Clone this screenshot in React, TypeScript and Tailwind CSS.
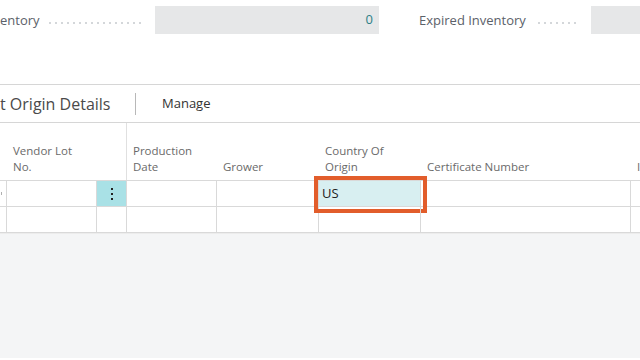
const font = { fontFamily: '"Open Sans", "Noto Sans", sans-serif' }

function Leader() {
  return <div className="flex-1 self-center mt-[5px] h-[2px] bg-[radial-gradient(circle,#d3d6d9_0.7px,transparent_1px)] bg-[length:6px_2px]" />
}

const cols = [
  { w: 'w-[7px]', head: [] as string[] },
  { w: 'w-[90px]', head: ['Vendor Lot', 'No.'] },
  { w: 'w-[30px]', head: [] },
  { w: 'w-[90px]', head: ['Production', 'Date'] },
  { w: 'w-[102px]', head: ['Grower'] },
  { w: 'w-[102px]', head: ['Country Of', 'Origin'] },
  { w: 'w-[210px]', head: ['Certificate Number'] },
  { w: 'w-[9px]', head: ['I'] },
]

function Row({ first }: { first?: boolean }) {
  return (
    <div className="flex h-[26px] border-b border-[#d9d9d9]">
      <div className="w-[7px] border-r border-[#d9d9d9] flex items-center">
        {first && <span className="ml-[1px] h-[3px] w-px bg-[#b0b0b0]" />}
      </div>
      <div className="w-[90px] border-r border-[#d9d9d9]" />
      <div className={`w-[30px] border-r border-[#d9d9d9] flex items-center justify-center ${first ? 'bg-[#a9e1e6]' : ''}`}>
        {first && (
          <div className="flex flex-col gap-[3px] items-center">
            <span className="w-[2px] h-[2px] bg-[#222]" />
            <span className="w-[2px] h-[2px] bg-[#222]" />
            <span className="w-[2px] h-[2px] bg-[#222]" />
          </div>
        )}
      </div>
      <div className="w-[90px] border-r border-[#d9d9d9]" />
      <div className="w-[102px] border-r border-[#d9d9d9]" />
      <div className={`relative w-[102px] border-r border-[#d9d9d9] flex items-center px-[3px] ${first ? 'bg-[#d8eff1]' : ''}`}>
        {first && (
          <>
            <span className="text-[13px] text-[#222]">US</span>
            <div className="absolute left-[-5px] top-[-5px] w-[113px] h-[37px] border-[4px] border-[#e25d2b]" />
          </>
        )}
      </div>
      <div className="w-[210px] border-r border-[#d9d9d9]" />
      <div className="flex-1" />
    </div>
  )
}

export default function App() {
  return (
    <div className="w-[640px] h-[360px] overflow-hidden bg-white flex flex-col" style={font}>
      <div className="h-[85px] border-b border-[#d6d6d6] pt-[6px]">
        <div className="flex h-[28px] items-stretch">
          <div className="w-[145px] flex items-center gap-[7px]">
            <span className="text-[13px] text-[#5b6169] leading-none mt-[1px]">entory</span>
            <Leader />
          </div>
          <div className="w-[10px]" />
          <div className="w-[224px] bg-[#e6e7e8] flex items-center justify-end pr-[6px] text-[13px] text-[#2f7f87]">0</div>
          <div className="w-[40px]" />
          <div className="w-[161px] flex items-center gap-[10px]">
            <span className="text-[13px] text-[#5b6169] leading-none mt-[1px]">Expired Inventory</span>
            <Leader />
          </div>
          <div className="w-[11px]" />
          <div className="flex-1 bg-[#e6e7e8]" />
        </div>
      </div>
      <div className="h-[38px] border-b border-[#d6d6d6] flex items-center">
        <span className="w-[135px] text-[16px] text-[#4a4a4a] font-medium leading-none whitespace-nowrap">t Origin Details</span>
        <div className="w-px h-[22px] bg-[#b8b8b8]" />
        <span className="ml-[26px] text-[13px] text-[#333]">Manage</span>
      </div>
      <div className="flex h-[58px] border-b border-[#d9d9d9]">
        {cols.map((c, i) => (
          <div
            key={i}
            className={`${c.w} ${i === 2 ? 'border-r border-[#e0e0e0]' : ''} ${i === 7 ? 'flex-1' : ''} flex flex-col justify-end pb-[5px] pl-[6px] text-[11.5px] leading-[16px] text-[#6a6a6a] whitespace-nowrap overflow-hidden`}
          >
            {c.head.map((h) => (
              <span key={h}>{h}</span>
            ))}
          </div>
        ))}
      </div>
      <Row first />
      <Row />
      <div className="flex-1 bg-[#f4f5f6] border-t border-[#ececec] mb-[2px]" />
    </div>
  )
}
